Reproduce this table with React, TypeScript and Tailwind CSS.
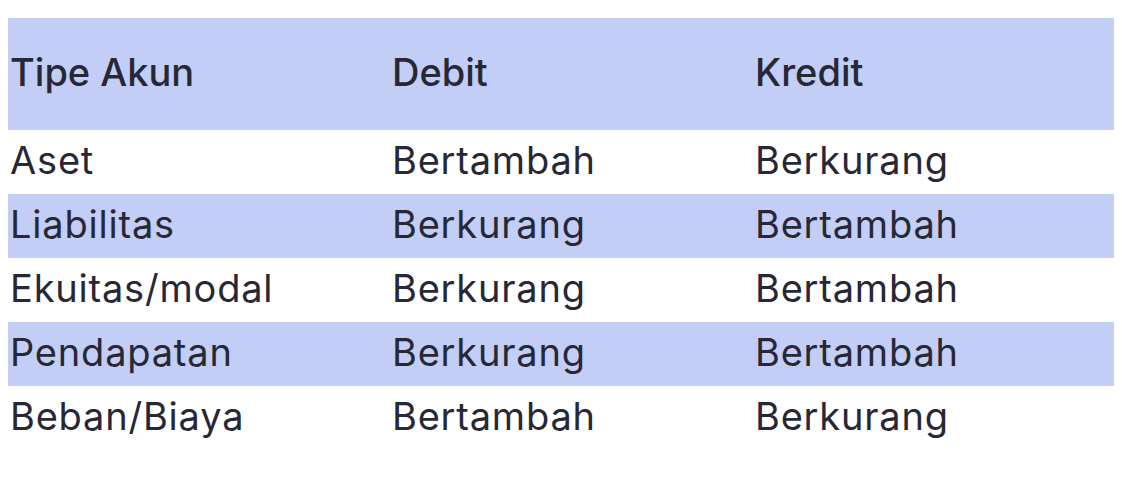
import React from "react";

const rows = [
  ["Aset", "Bertambah", "Berkurang"],
  ["Liabilitas", "Berkurang", "Bertambah"],
  ["Ekuitas/modal", "Berkurang", "Bertambah"],
  ["Pendapatan", "Berkurang", "Bertambah"],
  ["Beban/Biaya", "Bertambah", "Berkurang"],
];

export default function App() {
  return (
    <div className="w-[1122px] h-[490px] bg-white pt-[18px] px-[8px]" style={{ fontFamily: "Inter, 'Noto Sans', sans-serif" }}>
      <div className="w-[1106px] text-[#282735]">
        <div className="grid grid-cols-[382px_363px_361px] h-[112px] items-center pb-[4px] bg-[#c2cef6] text-[38px] leading-none font-medium">
          <div className="pl-[2px]">Tipe Akun</div>
          <div className="pl-[2px]">Debit</div>
          <div className="pl-[2px]">Kredit</div>
        </div>
        {rows.map((r, i) => (
          <div
            key={i}
            className={`grid grid-cols-[382px_363px_361px] h-[64px] items-center pb-[4px] text-[38px] leading-none tracking-[0.8px] ${i % 2 === 1 ? "bg-[#c2cef6]" : "bg-white"}`}
          >
            <div className="pl-[2px]">{r[0]}</div>
            <div className="pl-[2px]">{r[1]}</div>
            <div className="pl-[2px]">{r[2]}</div>
          </div>
        ))}
      </div>
    </div>
  );
}
